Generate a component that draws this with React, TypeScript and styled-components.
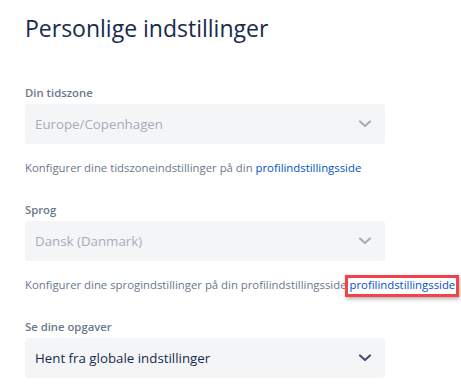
import React from "react";
import styled, { createGlobalStyle } from "styled-components";

const Global = createGlobalStyle`
  html, body { margin: 0; padding: 0; background: #ffffff; }
  body { font-family: "Open Sans", "Noto Sans", sans-serif; }
`;

const Page = styled.div`
  padding: 12px 0 0 25px;
  width: 360px;
  display: flex;
  flex-direction: column;
`;

const Title = styled.h1`
  margin: 0;
  font-size: 23px;
  font-weight: 400;
  line-height: 32px;
  color: #172b4d;
`;

const Field = styled.div<{ $top: number }>`
  display: flex;
  flex-direction: column;
  margin-top: ${(p) => p.$top}px;
`;

const Label = styled.div`
  font-size: 11.3px;
  font-weight: 600;
  line-height: 16px;
  color: #6b778c;
  margin-bottom: 3px;
`;

const Select = styled.div<{ $disabled?: boolean }>`
  height: 40px;
  box-sizing: border-box;
  border-radius: 3px;
  background: #f4f5f7;
  display: flex;
  align-items: center;
  justify-content: space-between;
  padding: 0 13px 0 10px;
  font-size: 13.3px;
  color: ${(p) => (p.$disabled ? "#a5adba" : "#172b4d")};
`;

const Chevron = styled.svg<{ $disabled?: boolean }>`
  width: 14px;
  height: 10px;
  color: ${(p) => (p.$disabled ? "#a5adba" : "#42526e")};
`;

const Help = styled.div`
  margin-top: 16px;
  font-size: 11.35px;
  line-height: 16px;
  color: #6b778c;
  white-space: nowrap;
`;

const Link = styled.a`
  color: #0052cc;
  text-decoration: none;
`;

const Marked = styled.span`
  position: relative;
  margin-left: 3px;
  &::after {
    content: "";
    position: absolute;
    left: -5px;
    right: -4px;
    top: -2px;
    bottom: -5px;
    border: 3px solid #f0444a;
    box-shadow: 1px 2px 4px rgba(0, 0, 0, 0.3);
    pointer-events: none;
  }
`;

const Down = ({ disabled }: { disabled?: boolean }) => (
  <Chevron $disabled={disabled} viewBox="0 0 14 10">
    <path d="M2 2.5 L7 7 L12 2.5" fill="none" stroke="currentColor" strokeWidth="2.2" strokeLinecap="round" strokeLinejoin="round" />
  </Chevron>
);

export default function App() {
  return (
    <>
      <Global />
      <Page>
        <Title>Personlige indstillinger</Title>
        <Field $top={41}>
          <Label>Din tidszone</Label>
          <Select $disabled>
            <span>Europe/Copenhagen</span>
            <Down disabled />
          </Select>
          <Help>
            Konfigurer dine tidszoneindstillinger på din <Link href="#">profilindstillingsside</Link>
          </Help>
        </Field>
        <Field $top={26}>
          <Label>Sprog</Label>
          <Select $disabled>
            <span>Dansk (Danmark)</span>
            <Down disabled />
          </Select>
          <Help>
            Konfigurer dine sprogindstillinger på din profilindstillingsside
            <Marked>
              <Link href="#">profilindstillingsside</Link>
            </Marked>
          </Help>
        </Field>
        <Field $top={26}>
          <Label>Se dine opgaver</Label>
          <Select>
            <span>Hent fra globale indstillinger</span>
            <Down />
          </Select>
        </Field>
      </Page>
    </>
  );
}
